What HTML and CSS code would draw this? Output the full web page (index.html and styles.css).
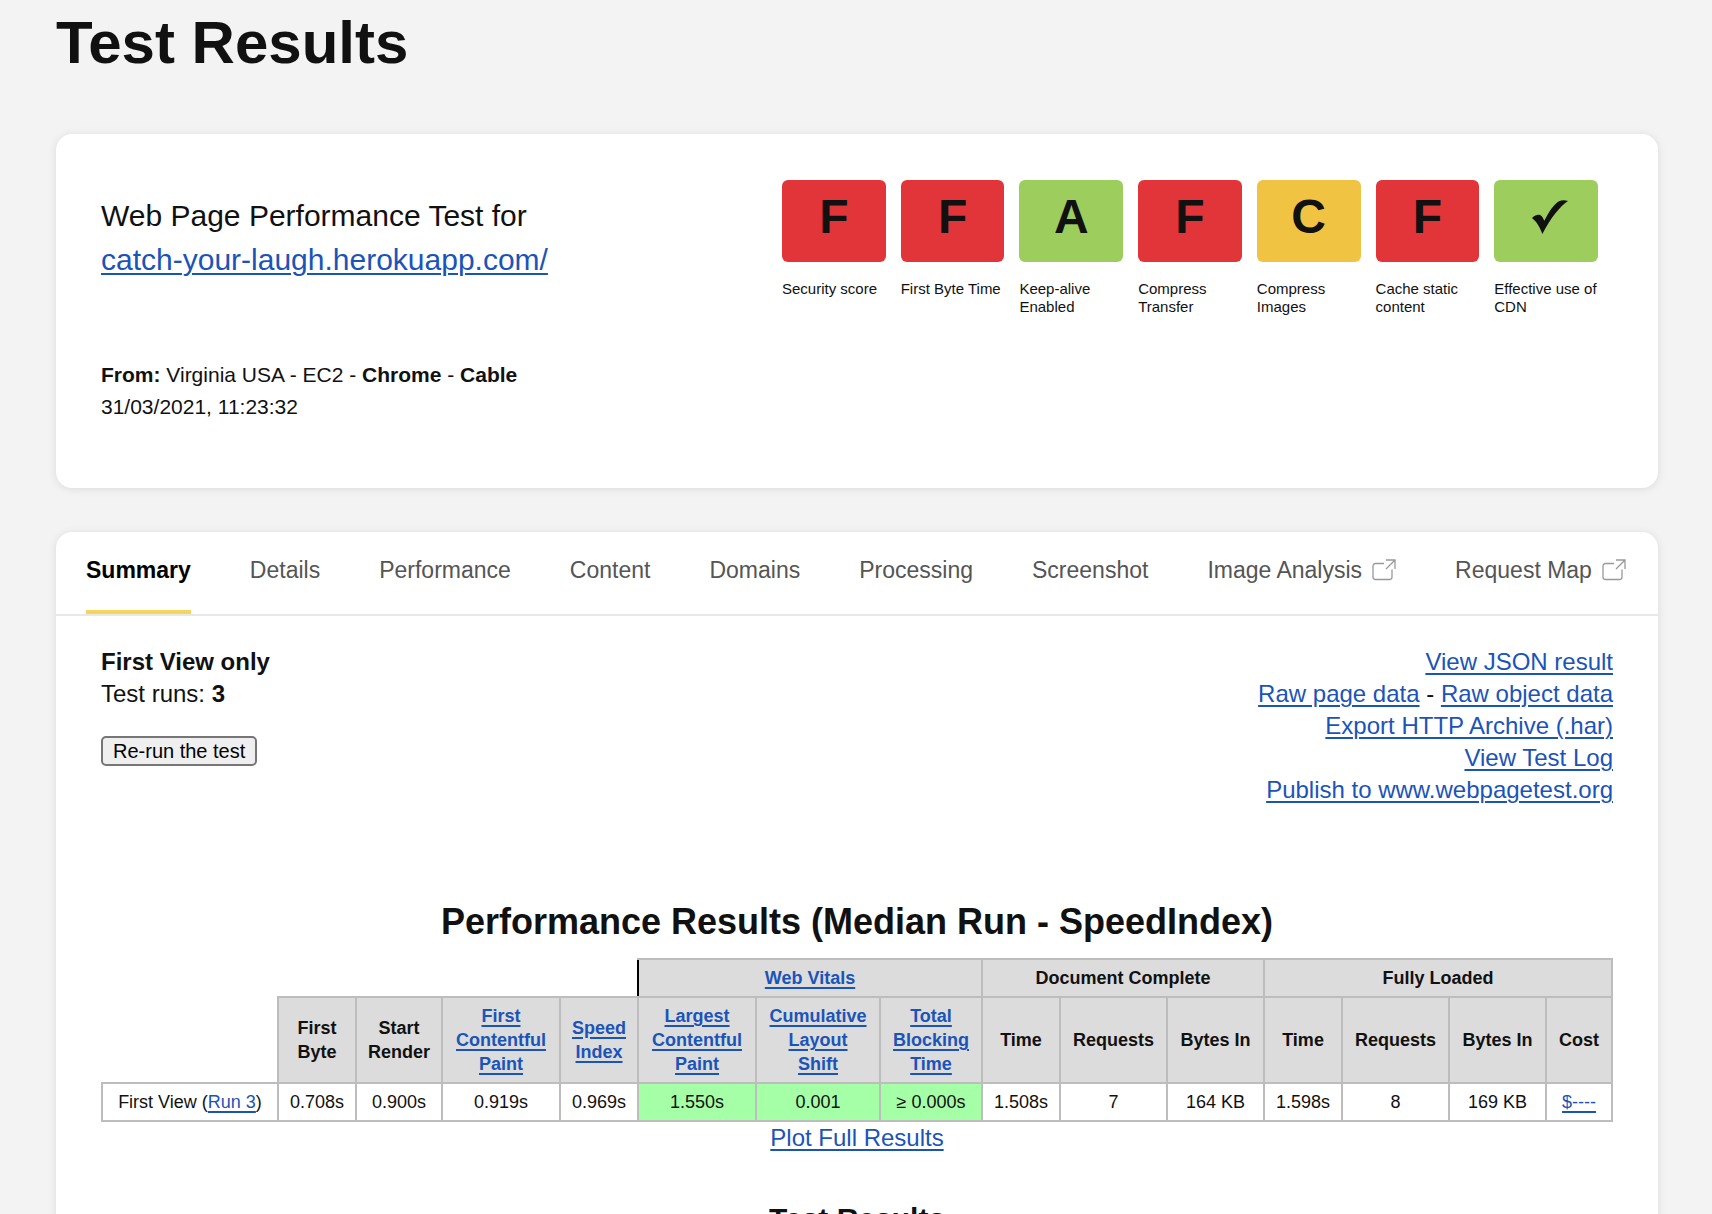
FILE: index.html
```html
<!DOCTYPE html>
<html lang="en">
<head>
<meta charset="utf-8">
<meta name="viewport" content="width=device-width, initial-scale=1">
<title>Test Results</title>
<link rel="stylesheet" href="styles.css">
</head>
<body>
<svg class="sprite">
  <symbol id="external" viewBox="0 0 24 22">
    <path d="M12 4.500H3.500a2.500 2.500 0 0 0-2.500 2.500V18a2.500 2.500 0 0 0 2.500 2.500H17.500a2.500 2.500 0 0 0 2.500-2.500V10.500M14 1H23V10M23 1L14 10" fill="none" stroke="currentColor" stroke-width="1.300"/>
  </symbol>
</svg>
<main class="page">
  <h1 class="page-title">Test Results</h1>

  <section class="card overview">
    <div class="overview-info">
      <h2 class="overview-title">Web Page Performance Test for<br><a href="#">catch-your-laugh.herokuapp.com/</a></h2>
      <p class="overview-meta"><strong>From:</strong> Virginia USA - EC2 - <strong>Chrome</strong> - <strong>Cable</strong><br>31/03/2021, 11:23:32</p>
    </div>
    <ul class="grades">
      <li><span class="grade grade-bad">F</span><span class="grade-label">Security score</span></li>
      <li><span class="grade grade-bad">F</span><span class="grade-label">First Byte Time</span></li>
      <li><span class="grade grade-good">A</span><span class="grade-label">Keep-alive Enabled</span></li>
      <li><span class="grade grade-bad">F</span><span class="grade-label">Compress Transfer</span></li>
      <li><span class="grade grade-fair">C</span><span class="grade-label">Compress Images</span></li>
      <li><span class="grade grade-bad">F</span><span class="grade-label">Cache static content</span></li>
      <li><span class="grade grade-good"><svg class="check" viewBox="0 0 36 34" role="img" aria-label="Pass"><path d="M0 18C3 15 6.500 14.200 8.500 15.200C10.500 16.200 11 18 12.300 20.800C17 11.500 22 4 27 1.200C29.500 0 33 0 36 1C28 6.500 19 17 10.400 34C7.500 26.500 4.500 21.500 0 18Z" fill="currentColor"/></svg></span><span class="grade-label">Effective use of CDN</span></li>
    </ul>
  </section>

  <section class="card results">
    <nav class="tabs">
      <a class="tab tab-active" href="#">Summary</a>
      <a class="tab" href="#">Details</a>
      <a class="tab" href="#">Performance</a>
      <a class="tab" href="#">Content</a>
      <a class="tab" href="#">Domains</a>
      <a class="tab" href="#">Processing</a>
      <a class="tab" href="#">Screenshot</a>
      <a class="tab" href="#">Image Analysis<svg class="tab-icon" aria-hidden="true"><use href="#external"/></svg></a>
      <a class="tab" href="#">Request Map<svg class="tab-icon" aria-hidden="true"><use href="#external"/></svg></a>
    </nav>

    <div class="results-body">
      <div class="summary">
        <div>
          <p><strong>First View only</strong><br>Test runs: <strong>3</strong></p>
          <button class="rerun" type="button">Re-run the test</button>
        </div>
        <ul class="exports">
          <li><a href="#">View JSON result</a></li>
          <li><a href="#">Raw page data</a> - <a href="#">Raw object data</a></li>
          <li><a href="#">Export HTTP Archive (.har)</a></li>
          <li><a href="#">View Test Log</a></li>
          <li><a href="#">Publish to www.webpagetest.org</a></li>
        </ul>
      </div>

      <h2 class="section-title">Performance Results (Median Run - SpeedIndex)</h2>
      <table class="metrics">
        <colgroup>
          <col class="col-view"><col class="col-time"><col class="col-render"><col class="col-paint"><col class="col-time">
          <col class="col-paint"><col class="col-shift"><col class="col-blocking">
          <col class="col-time"><col class="col-requests"><col class="col-bytes">
          <col class="col-time"><col class="col-requests"><col class="col-bytes"><col class="col-cost">
        </colgroup>
        <thead>
          <tr>
            <td class="blank" colspan="5"></td>
            <th class="group-first" colspan="3"><a href="#">Web Vitals</a></th>
            <th colspan="3">Document Complete</th>
            <th colspan="4">Fully Loaded</th>
          </tr>
          <tr>
            <td class="blank"></td>
            <th>First<br>Byte</th>
            <th>Start<br>Render</th>
            <th><a href="#">First<br>Contentful<br>Paint</a></th>
            <th><a href="#">Speed<br>Index</a></th>
            <th><a href="#">Largest<br>Contentful<br>Paint</a></th>
            <th><a href="#">Cumulative<br>Layout<br>Shift</a></th>
            <th><a href="#">Total<br>Blocking<br>Time</a></th>
            <th>Time</th>
            <th>Requests</th>
            <th>Bytes In</th>
            <th>Time</th>
            <th>Requests</th>
            <th>Bytes In</th>
            <th>Cost</th>
          </tr>
        </thead>
        <tbody>
          <tr>
            <td>First View (<a href="#">Run 3</a>)</td>
            <td>0.708s</td>
            <td>0.900s</td>
            <td>0.919s</td>
            <td>0.969s</td>
            <td class="good">1.550s</td>
            <td class="good">0.001</td>
            <td class="good">≥ 0.000s</td>
            <td>1.508s</td>
            <td>7</td>
            <td>164 KB</td>
            <td>1.598s</td>
            <td>8</td>
            <td>169 KB</td>
            <td><a href="#">$----</a></td>
          </tr>
        </tbody>
      </table>
      <p class="plot"><a href="#">Plot Full Results</a></p>
      <h3 class="subsection-title">Test Results</h3>
    </div>
  </section>
</main>
</body>
</html>
```
FILE: styles.css
```css
* {
  box-sizing: border-box;
}

body,
h1,
h2,
h3,
p,
ul {
  margin: 0;
}

ul {
  padding: 0;
  list-style: none;
}

body {
  background: #f3f3f3;
  color: #111;
  font: 24px/32px "Liberation Sans", Arial, sans-serif;
}

a {
  color: #1b54b8;
  text-decoration-thickness: 2px;
  text-underline-offset: 3px;
}

.sprite {
  display: none;
}

.page {
  height: 100vh;
  padding: 7px 54px 0 56px;
  overflow: hidden;
}

.page-title {
  margin-bottom: 55px;
  font-size: 60px;
  line-height: 72px;
}

.card {
  background: #fff;
  border-radius: 16px;
  box-shadow: 0 1px 8px rgba(0, 0, 0, 0.1);
}

/* Overview */

.overview {
  display: flex;
  justify-content: space-between;
  margin-bottom: 44px;
  padding: 46px 60px 46px 45px;
}

.overview-info {
  padding: 14px 0 19px;
}

.overview-title {
  margin-bottom: 77px;
  font-size: 30px;
  font-weight: normal;
  line-height: 44px;
}

.overview-meta {
  font-size: 21px;
}

.grades {
  display: grid;
  flex: 0 0 816px;
  grid-template-columns: repeat(7, 1fr);
  gap: 15px;
}

.grade {
  display: flex;
  align-items: center;
  justify-content: center;
  height: 82px;
  margin-bottom: 18px;
  padding-bottom: 8px;
  border-radius: 6px;
  font-size: 48px;
  font-weight: bold;
}

.grade-bad {
  background: #e23539;
}

.grade-good {
  background: #9ccd5d;
}

.grade-fair {
  background: #f0c442;
}

.check {
  width: 36px;
  height: 34px;
  margin-left: 8px;
}

.grade-label {
  display: block;
  font-size: 15px;
  line-height: 18px;
}

/* Tabs */

.tabs {
  display: flex;
  justify-content: space-between;
  padding: 0 32px 0 30px;
  border-bottom: 2px solid #e8e8e8;
}

.tab {
  display: flex;
  align-items: center;
  padding-bottom: 2px;
  border-bottom: 4px solid transparent;
  color: #555;
  font-size: 23px;
  line-height: 76px;
  text-decoration: none;
  white-space: nowrap;
}

.tab-active {
  border-color: #f6d55f;
  color: #000;
  font-weight: bold;
}

.tab-icon {
  width: 24px;
  height: 22px;
  margin-left: 10px;
  color: #999;
}

/* Results */

.results-body {
  padding: 30px 45px;
}

.summary {
  display: flex;
  justify-content: space-between;
  margin-bottom: 94px;
}

.rerun {
  display: block;
  height: 30px;
  margin-top: 26px;
  padding: 0 10px;
  border: 2px solid #767676;
  border-radius: 5px;
  background: #efefef;
  color: #000;
  font: 20px/26px "Liberation Sans", Arial, sans-serif;
}

.exports {
  text-align: right;
}

.section-title {
  margin-bottom: 14px;
  font-size: 36px;
  line-height: 44px;
  text-align: center;
}

.metrics {
  width: 100%;
  border-collapse: collapse;
  table-layout: fixed;
  font-size: 18px;
  line-height: 24px;
  text-align: center;
}

.metrics th,
.metrics td {
  padding: 6px 4px;
  border: 2px solid #bdbdbd;
}

.metrics th {
  background: #dcdcdc;
}

.metrics .blank {
  border-style: none;
}

.metrics .group-first {
  border-left-color: #000;
}

.metrics .good {
  background: #a4ffa6;
}

.col-view {
  width: 176px;
}

.col-time {
  width: 78px;
}

.col-render {
  width: 86px;
}

.col-paint {
  width: 118px;
}

.col-shift {
  width: 124px;
}

.col-blocking {
  width: 102px;
}

.col-requests {
  width: 107px;
}

.col-bytes {
  width: 97px;
}

.col-cost {
  width: 66px;
}

.plot {
  text-align: center;
}

.subsection-title {
  margin-top: 47px;
  font-size: 30px;
  line-height: 36px;
  text-align: center;
}
```
